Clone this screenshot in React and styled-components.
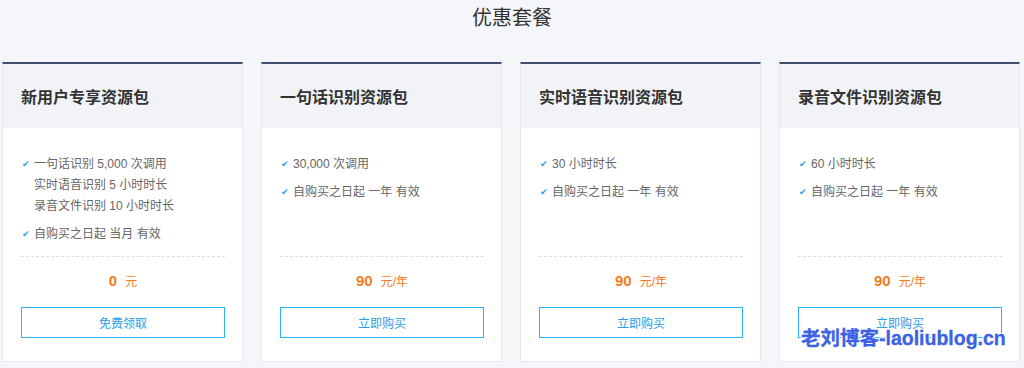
import React from 'react';
import styled, { createGlobalStyle } from 'styled-components';

const GlobalStyle = createGlobalStyle`
  html, body {
    margin: 0;
    padding: 0;
    background: #f5f6f9;
    font-family: "Liberation Sans", "Noto Sans CJK SC", sans-serif;
  }
`;

const Page = styled.div`
  position: relative;
  width: 1024px;
  height: 368px;
  overflow: hidden;
  background: #f5f6f9;
`;

const Title = styled.h2`
  margin: 0;
  padding-top: 5px;
  height: 57px;
  text-align: center;
  font-size: 20px;
  font-weight: 400;
  line-height: 26px;
  color: #333;
`;

const CardRow = styled.div`
  display: grid;
  grid-template-columns: repeat(4, 241px);
  gap: 18px;
  padding-left: 2px;
`;

const Card = styled.div`
  display: flex;
  flex-direction: column;
  height: 300px;
  background: #fff;
  border: 1px solid #e6e8ec;
  border-top: 2px solid #3d4f6d;
  box-sizing: border-box;
`;

const CardHead = styled.div`
  height: 64px;
  display: flex;
  align-items: center;
  padding-left: 18px;
  background: #f2f3f6;
  font-size: 16px;
  font-weight: 700;
  color: #333;
`;

const CardBody = styled.div`
  flex: 1;
  display: flex;
  flex-direction: column;
  padding: 0 17px 0 18px;
`;

const Features = styled.ul`
  list-style: none;
  margin: 0;
  padding: 26px 0 0;
  height: 102px;
`;

const Feature = styled.li`
  position: relative;
  padding-left: 13px;
  margin-bottom: 7px;
  font-size: 12px;
  line-height: 21px;
  color: #666;
`;

const Check = styled.span`
  position: absolute;
  left: 1px;
  top: 0;
  color: #2aa3ee;
  font-size: 9px;
`;

const Divider = styled.div`
  border-top: 1px dashed #dcdfe4;
`;

const Price = styled.div`
  height: 46px;
  display: flex;
  align-items: center;
  justify-content: center;
  gap: 8px;
  color: #f37b1d;
`;

const Amount = styled.span`
  font-size: 15px;
  font-weight: 700;
`;

const Unit = styled.span`
  font-size: 12px;
`;

const Button = styled.button`
  margin-top: 4px;
  height: 31px;
  width: 100%;
  background: #fff;
  border: 1px solid #29b5f6;
  color: #2a9ee8;
  font-size: 12px;
  font-family: inherit;
  cursor: pointer;
`;

const Watermark = styled.div`
  position: absolute;
  left: 801px;
  top: 322px;
  font-size: 19.5px;
  font-weight: 700;
  color: #3c61e4;
  -webkit-text-stroke: 0.3px #3c61e4;
  text-shadow: 1px 1px 0 #fff, -1px -1px 0 #fff, 1px -1px 0 #fff, -1px 1px 0 #fff;
`;

const plans = [
  {
    name: '新用户专享资源包',
    features: [['一句话识别 5,000 次调用', '实时语音识别 5 小时时长', '录音文件识别 10 小时时长'], ['自购买之日起 当月 有效']],
    amount: '0',
    unit: '元',
    action: '免费领取',
  },
  {
    name: '一句话识别资源包',
    features: [['30,000 次调用'], ['自购买之日起 一年 有效']],
    amount: '90',
    unit: '元/年',
    action: '立即购买',
  },
  {
    name: '实时语音识别资源包',
    features: [['30 小时时长'], ['自购买之日起 一年 有效']],
    amount: '90',
    unit: '元/年',
    action: '立即购买',
  },
  {
    name: '录音文件识别资源包',
    features: [['60 小时时长'], ['自购买之日起 一年 有效']],
    amount: '90',
    unit: '元/年',
    action: '立即购买',
  },
];

const App = () => (
  <Page>
    <GlobalStyle />
    <Title>优惠套餐</Title>
    <CardRow>
      {plans.map((plan) => (
        <Card key={plan.name}>
          <CardHead>{plan.name}</CardHead>
          <CardBody>
            <Features>
              {plan.features.map((lines, i) => (
                <Feature key={i}>
                  <Check>✔</Check>
                  {lines.map((line, j) => (
                    <div key={j}>{line}</div>
                  ))}
                </Feature>
              ))}
            </Features>
            <Divider />
            <Price>
              <Amount>{plan.amount}</Amount>
              <Unit>{plan.unit}</Unit>
            </Price>
            <Button>{plan.action}</Button>
          </CardBody>
        </Card>
      ))}
    </CardRow>
    <Watermark>老刘博客-laoliublog.cn</Watermark>
  </Page>
);

export default App;
